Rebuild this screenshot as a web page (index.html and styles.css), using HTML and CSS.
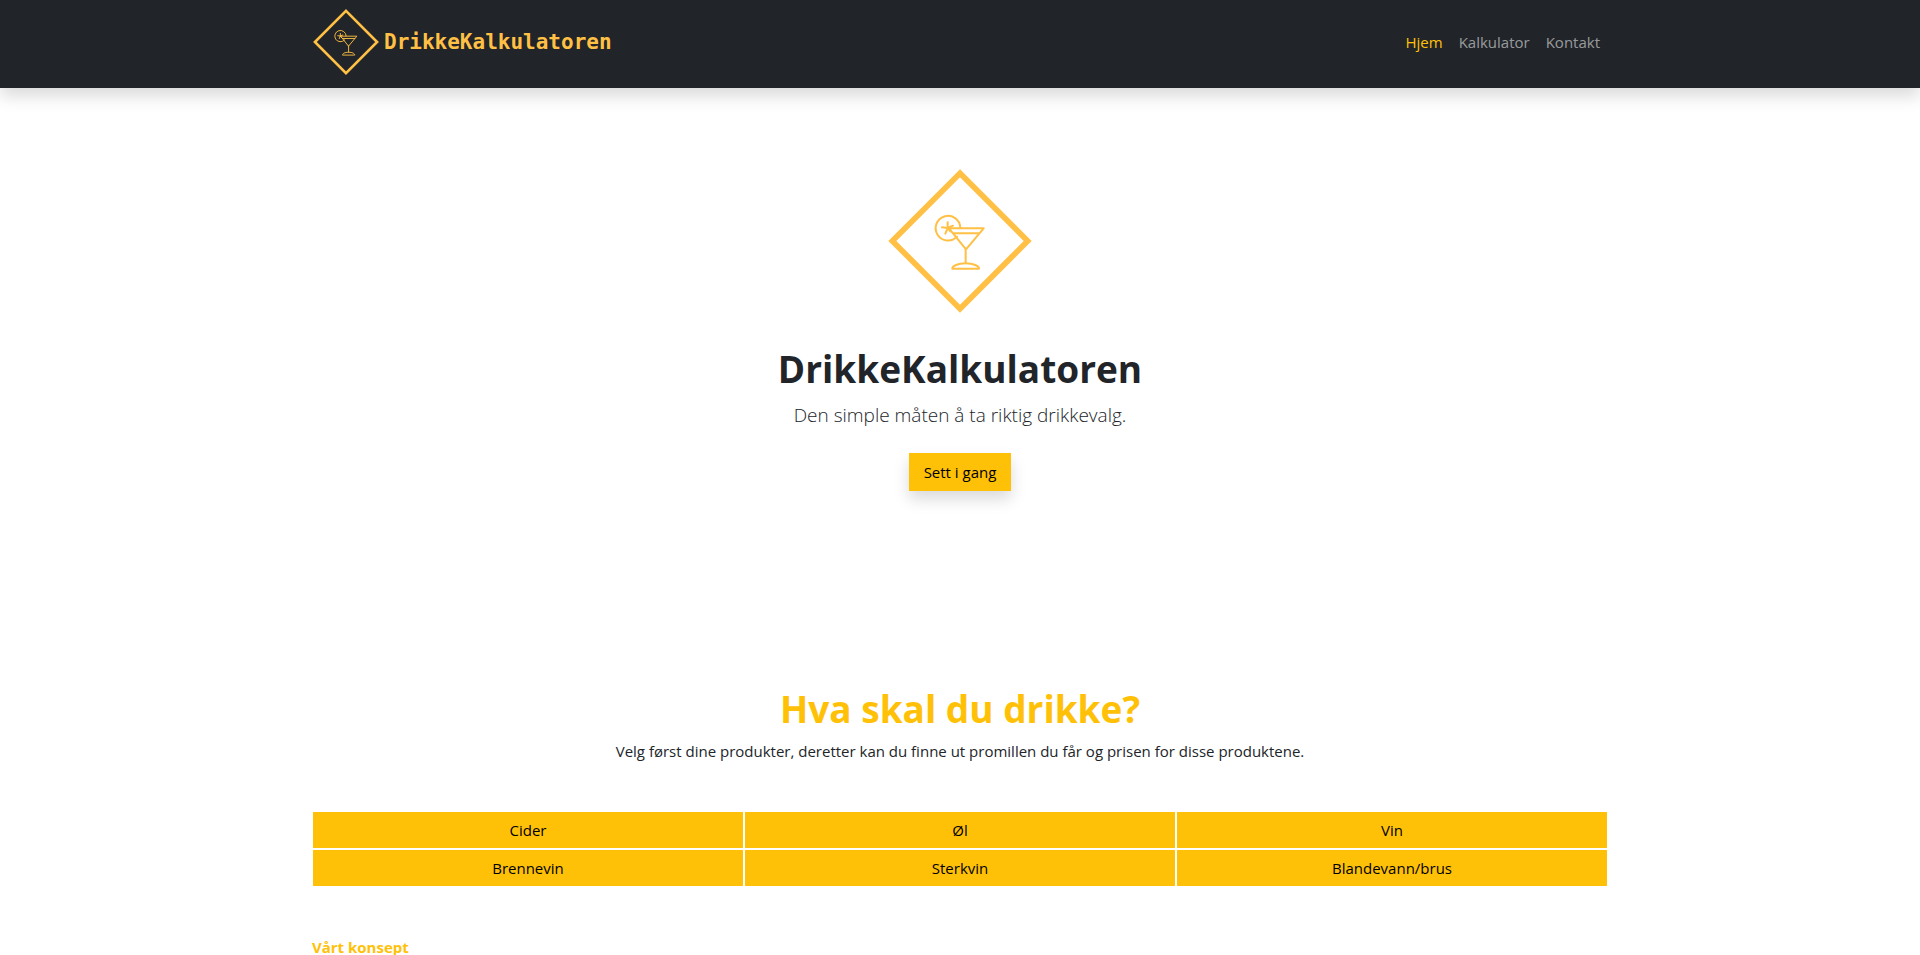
FILE: index.html
```html
<!DOCTYPE html>
<html lang="no">
<head>
<meta charset="utf-8">
<meta name="viewport" content="width=device-width, initial-scale=1">
<title>DrikkeKalkulatoren</title>
<link rel="stylesheet" href="styles.css">
</head>
<body>
<svg class="sprite" aria-hidden="true">
  <symbol id="cocktail" viewBox="49 52 444 444">
    <g fill="none" stroke="#ffc045" stroke-linejoin="miter">
      <path stroke-width="17" d="M271 71 474 274 271 477 68 274Z"/>
      <g stroke-width="6" stroke-linejoin="round" stroke-linecap="round">
        <path d="M272 234A37 37 0 1 0 262 261"/>
        <path d="M234 235V218M234 235 217 233M234 235 227 252M234 235 242 245M234 235 250 228"/>
        <path d="M238 236H342L289 299ZM249 251H328M288 299V341"/>
        <path d="M248 357C248 349 264 341 288 341S328 349 328 357Z"/>
      </g>
    </g>
  </symbol>
</svg>
<header class="topbar">
  <div class="container topbar-inner">
    <a class="brand" href="#">
      <svg class="brand-logo" aria-hidden="true"><use href="#cocktail"/></svg>
      <span>DrikkeKalkulatoren</span>
    </a>
    <nav class="nav">
      <a class="nav-link active" href="#">Hjem</a>
      <a class="nav-link" href="#">Kalkulator</a>
      <a class="nav-link" href="#">Kontakt</a>
    </nav>
  </div>
</header>
<main>
  <section class="hero">
    <svg class="hero-logo" aria-hidden="true"><use href="#cocktail"/></svg>
    <h1 class="title">DrikkeKalkulatoren</h1>
    <p class="lead">Den simple måten å ta riktig drikkevalg.</p>
    <button class="btn btn-start" type="button">Sett i gang</button>
  </section>
  <section class="container drinks">
    <h2 class="title title-accent">Hva skal du drikke?</h2>
    <p class="intro">Velg først dine produkter, deretter kan du finne ut promillen du får og prisen for disse produktene.</p>
    <div class="categories">
      <button class="btn" type="button">Cider</button>
      <button class="btn" type="button">Øl</button>
      <button class="btn" type="button">Vin</button>
      <button class="btn" type="button">Brennevin</button>
      <button class="btn" type="button">Sterkvin</button>
      <button class="btn" type="button">Blandevann/brus</button>
    </div>
  </section>
  <section class="container concept">
    <h3 class="concept-title">Vårt konsept</h3>
  </section>
</main>
</body>
</html>
```
FILE: styles.css
```css
*, *::before, *::after {
  box-sizing: border-box;
}

body {
  margin: 0;
  background: #fff;
  color: #212529;
  font-family: "Segoe UI", "Open Sans", "Noto Sans", sans-serif;
  font-size: 15px;
  line-height: 24px;
}

h1, h2, h3, p {
  margin: 0;
}

.sprite {
  position: absolute;
  width: 0;
  height: 0;
}

.container {
  width: 100%;
  max-width: 1320px;
  margin: 0 auto;
  padding: 0 12px;
}

.topbar {
  background: #212529;
  box-shadow: 0 8px 16px rgba(0, 0, 0, 0.15);
}

.topbar-inner {
  display: flex;
  align-items: center;
  justify-content: space-between;
  padding-top: 8px;
  padding-bottom: 12px;
}

.brand {
  display: flex;
  align-items: center;
  gap: 4px;
  color: #ffc045;
  font-family: "DejaVu Sans Mono", monospace;
  font-size: 21px;
  font-weight: 700;
  text-decoration: none;
}

.brand-logo {
  width: 68px;
  height: 68px;
}

.nav {
  display: flex;
}

.nav-link {
  padding: 8px;
  color: rgba(255, 255, 255, 0.55);
  text-decoration: none;
}

.nav-link.active {
  color: #ffc107;
}

.hero {
  display: flex;
  flex-direction: column;
  align-items: center;
  padding: 79px 12px 194px;
  text-align: center;
}

.hero-logo {
  width: 148px;
  height: 148px;
}

.title {
  margin-top: 30px;
  font-size: 37px;
  font-weight: 700;
  line-height: 48px;
}

.title-accent {
  margin-top: 0;
  color: #ffc107;
}

.lead {
  margin: 7px 0 23px;
  font-size: 19px;
  font-weight: 300;
  line-height: 30px;
}

.btn {
  padding: 6px 12px;
  border: 0;
  background: #ffc107;
  color: #000;
  font: inherit;
  cursor: pointer;
}

.btn-start {
  padding: 7px 15px;
  box-shadow: 0 8px 16px rgba(0, 0, 0, 0.15);
}

.drinks {
  text-align: center;
}

.intro {
  margin: 6px 0 48px;
}

.categories {
  display: grid;
  grid-template-columns: repeat(3, 1fr);
  gap: 2px;
  padding: 1px;
}

.concept {
  margin-top: 50px;
}

.concept-title {
  color: #ffc107;
  font-size: 15px;
  font-weight: 700;
  line-height: 20px;
}
```
